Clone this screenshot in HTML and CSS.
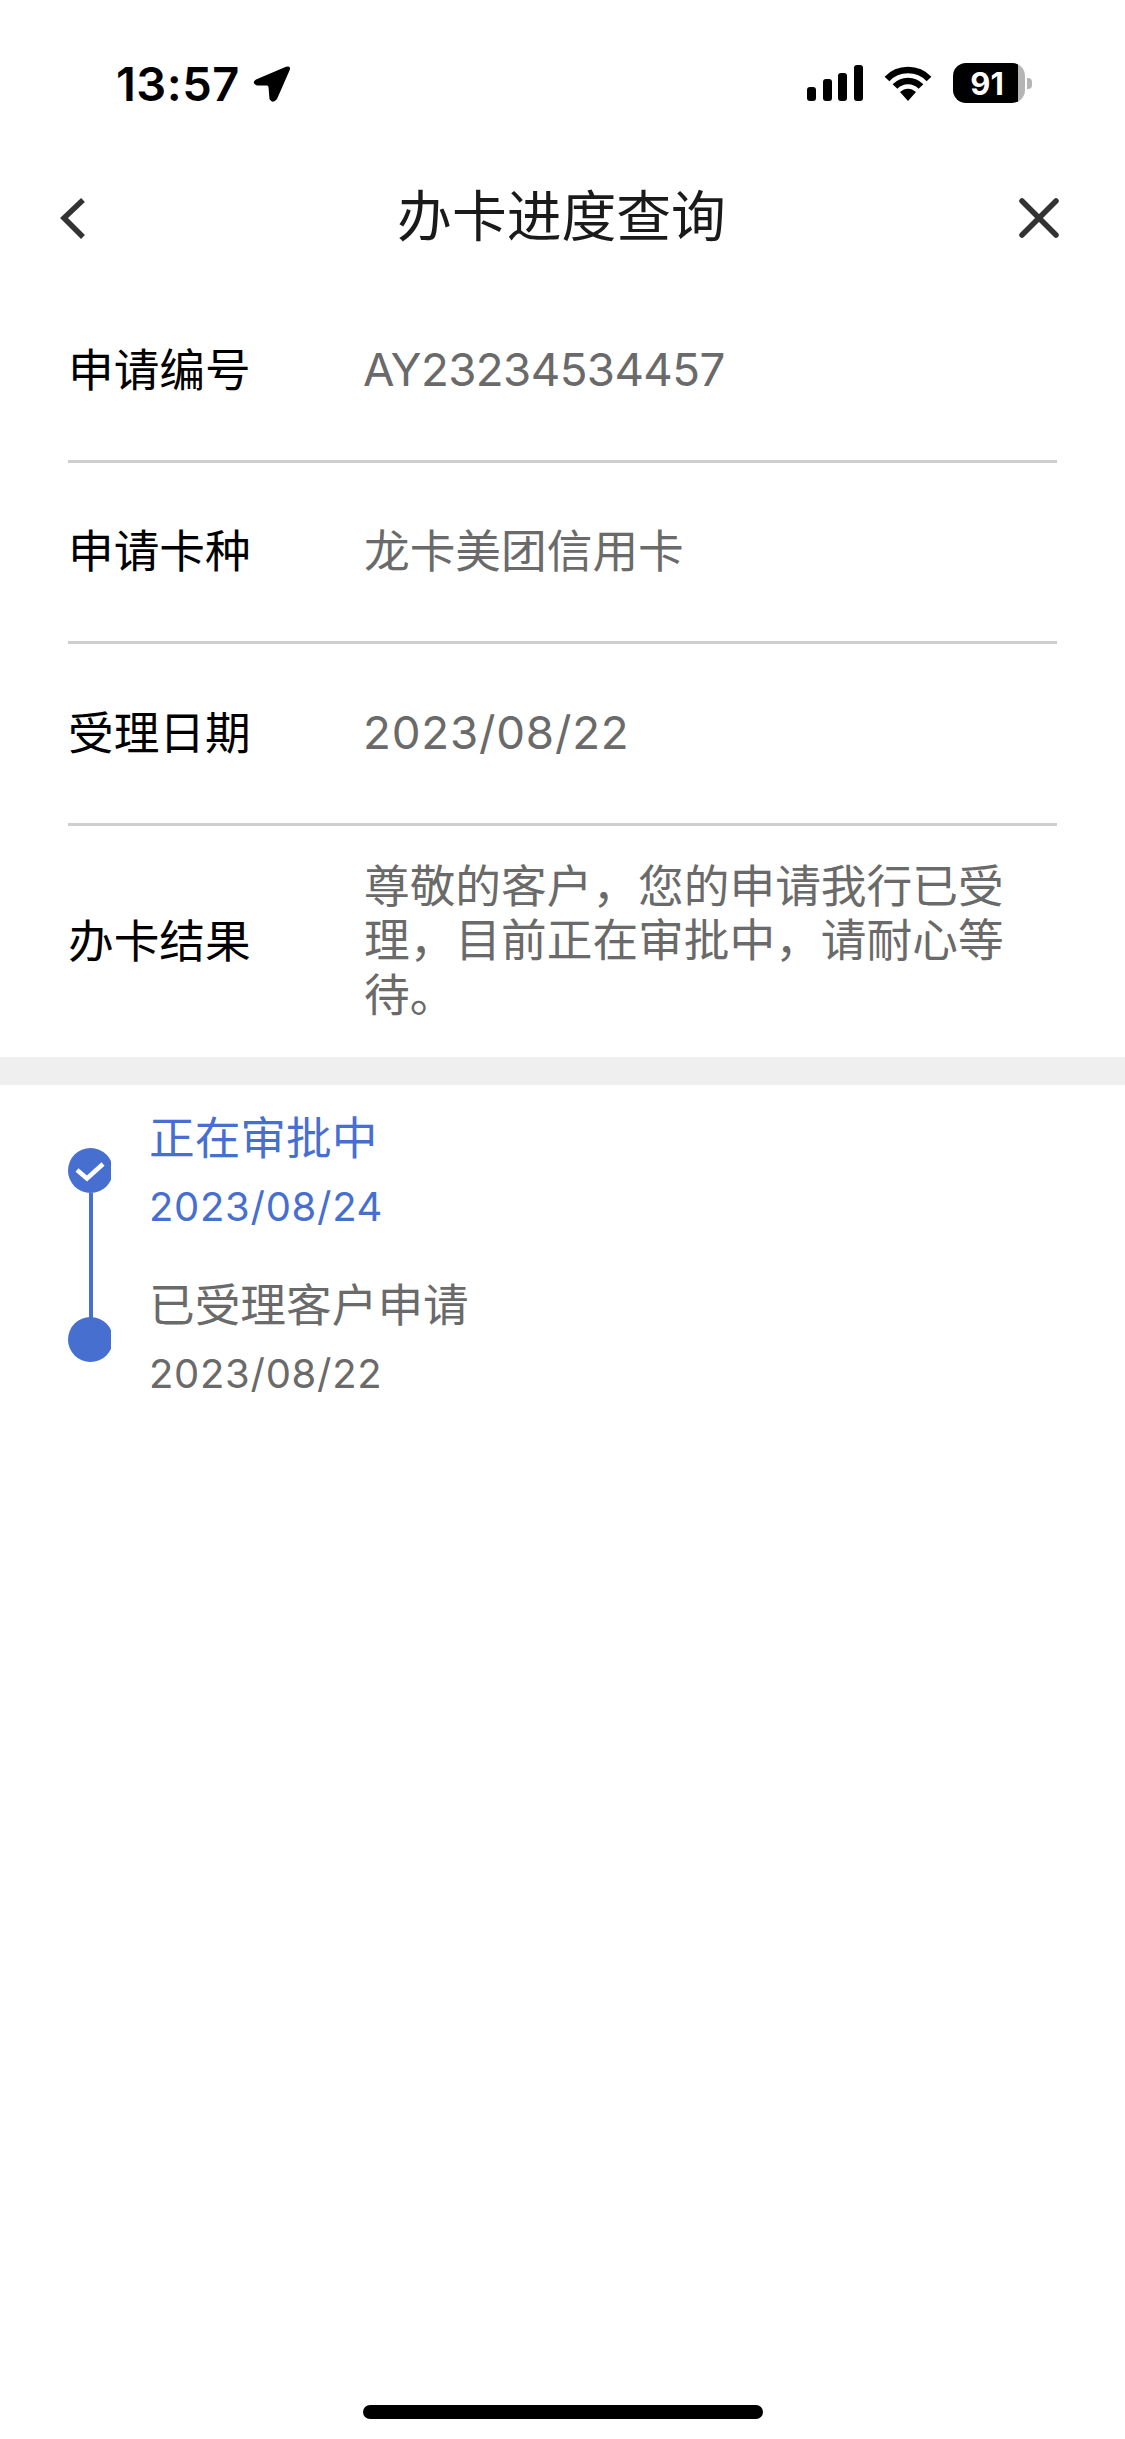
FILE: index.html
```html
<!DOCTYPE html>
<html lang="zh-CN">
<head>
    <meta charset="UTF-8">
    <meta name="viewport" content="width=device-width, initial-scale=1.0">
    <title>办卡进度查询</title>
    <link rel="stylesheet" href="styles.css">
</head>
<body>
    <div class="statusbar">
        <div class="status-left">
            <span class="time">13:57</span>
            <svg class="location" width="38" height="37" viewBox="0 0 38 37"><path d="M3 13.5 L33 0.8 Q38.5 -0.8 36.5 4.5 L24 33 Q19.5 38.5 16.5 33 L15.5 21 Q15.3 19.5 14 19.5 L4 19.5 Q-2 17 3 13.5 Z" fill="#000"/></svg>
        </div>
        <div class="status-right">
            <svg width="56" height="36" viewBox="0 0 56 36"><rect x="0" y="22" width="9" height="14" rx="3" fill="#000"/><rect x="16" y="14" width="9" height="22" rx="3" fill="#000"/><rect x="31" y="8" width="9" height="28" rx="3" fill="#000"/><rect x="47" y="0" width="9" height="36" rx="3" fill="#000"/></svg>
            <svg width="48" height="36" viewBox="0 0 48 36"><path d="M3 14 C14 2 34 2 45 14" fill="none" stroke="#000" stroke-width="6.5"/><path d="M11 21.5 C18 14 30 14 37 21.5" fill="none" stroke="#000" stroke-width="6.5"/><path d="M16 27 C21 22.5 27 22.5 32 27 L24 36 Z" fill="#000"/></svg>
            <div class="battery">
                <div class="battery-body"><span>91</span></div>
                <div class="battery-tip"></div>
            </div>
        </div>
    </div>

    <div class="navbar">
        <svg class="back" width="30" height="46" viewBox="0 0 30 46"><path d="M25 5 L6 23 L25 42" fill="none" stroke="#333" stroke-width="5.5"/></svg>
        <h1>办卡进度查询</h1>
        <svg class="close" width="46" height="46" viewBox="0 0 46 46"><path d="M6 6 L40 40 M40 6 L6 40" fill="none" stroke="#333" stroke-width="5.5" stroke-linecap="round"/></svg>
    </div>

    <div class="info">
        <div class="row">
            <div class="label">申请编号</div>
            <div class="value value-id">AY23234534457</div>
        </div>
        <div class="row">
            <div class="label">申请卡种</div>
            <div class="value">龙卡美团信用卡</div>
        </div>
        <div class="row">
            <div class="label">受理日期</div>
            <div class="value value-date">2023/08/22</div>
        </div>
        <div class="row row-last">
            <div class="label">办卡结果</div>
            <div class="value">尊敬的客户，您的申请我行已受理，目前正在审批中，请耐心等待。</div>
        </div>
    </div>

    <div class="divider"></div>

    <div class="timeline">
        <div class="step active">
            <div class="dot">
                <svg width="43" height="45" viewBox="0 0 43 45"><circle cx="22.5" cy="22.5" r="22.5" fill="#466fd0"/><path d="M9 22 L19 30.5 L35 16" fill="none" stroke="#fff" stroke-width="4.5"/></svg>
            </div>
            <div class="step-text">
                <div class="step-title">正在审批中</div>
                <div class="step-date">2023/08/24</div>
            </div>
        </div>
        <div class="step">
            <div class="dot">
                <svg width="43" height="45" viewBox="0 0 43 45"><circle cx="22.5" cy="22.5" r="22.5" fill="#466fd0"/></svg>
            </div>
            <div class="step-text">
                <div class="step-title">已受理客户申请</div>
                <div class="step-date">2023/08/22</div>
            </div>
        </div>
    </div>

    <div class="home-bar"></div>
</body>
</html>
```

FILE: styles.css
```css
html, body {
    margin: 0;
    padding: 0;
    height: 100%;
    background-color: #fff;
    font-family: Inter, "Noto Sans CJK SC", sans-serif;
}
body {
    width: 1125px;
    height: 2439px;
    display: flex;
    flex-direction: column;
    overflow: hidden;
}
.statusbar {
    height: 166px;
    padding: 60px 93px 0 116px;
    box-sizing: border-box;
    display: flex;
    justify-content: space-between;
    align-items: flex-start;
    flex-shrink: 0;
}
.status-left {
    display: flex;
    align-items: center;
    gap: 13px;
}
.time {
    font-size: 47px;
    font-weight: 600;
    line-height: 48px;
    letter-spacing: 0.5px;
    color: #000;
}
.status-right {
    display: flex;
    align-items: center;
    gap: 21px;
    padding-top: 3px;
}
.battery {
    display: flex;
    align-items: center;
    gap: 2px;
}
.battery-body {
    width: 72px;
    height: 40px;
    border-radius: 13px;
    background: linear-gradient(to right, #000 65px, #b5b5b5 65px);
    display: flex;
    align-items: center;
    justify-content: center;
    padding-right: 4px;
    box-sizing: border-box;
}
.battery-body span {
    font-size: 31px;
    font-weight: 700;
    color: #fff;
}
.battery-tip {
    width: 5px;
    height: 11px;
    background-color: #b5b5b5;
    border-radius: 0 4px 4px 0;
}
.navbar {
    height: 104px;
    padding: 0 63px 0 58px;
    display: grid;
    grid-template-columns: 1fr auto 1fr;
    align-items: center;
    flex-shrink: 0;
}
.navbar h1 {
    margin: 0;
    padding: 0 0 5px 3px;
    font-size: 54.8px;
    font-weight: 400;
    line-height: 60px;
    color: #1a1a1a;
}
.close {
    justify-self: end;
}
.info {
    padding: 0 68px;
    flex-shrink: 0;
}
.row {
    height: 182px;
    display: flex;
    align-items: center;
    border-bottom: 3px solid #cfcfcf;
    box-sizing: border-box;
}
.row:first-child {
    height: 193px;
    padding-top: 11px;
}
.row:nth-child(2) {
    height: 181px;
}
.row-last {
    height: 231px;
    border-bottom: none;
}
.label {
    width: 296px;
    flex-shrink: 0;
    font-size: 45.7px;
    line-height: 54px;
    color: #000;
}
.value {
    font-size: 45.7px;
    line-height: 54.5px;
    color: #6a6a6a;
}
.value-id {
    margin-left: -1px;
    letter-spacing: -0.6px;
}
.value-date {
    margin-left: -1px;
    letter-spacing: 0.8px;
}
.divider {
    height: 28px;
    background-color: #efefef;
    flex-shrink: 0;
}
.timeline {
    padding: 24px 68px 0;
}
.step {
    display: flex;
    gap: 38px;
    height: 167px;
}
.dot {
    width: 43px;
    height: 45px;
    margin-top: 39px;
    position: relative;
    flex-shrink: 0;
}
.step:last-child .dot {
    margin-top: 41px;
}
.dot svg {
    display: block;
}
.step.active .dot::after {
    content: "";
    position: absolute;
    left: 21px;
    top: 45px;
    width: 4px;
    height: 125px;
    background-color: #466fd0;
}
.step-title {
    font-size: 45.7px;
    line-height: 60px;
    color: #6a6a6a;
}
.step-date {
    font-size: 40px;
    line-height: 48px;
    letter-spacing: 0.7px;
    margin-top: 14px;
    color: #6a6a6a;
}
.active .step-title, .active .step-date {
    color: #466fd0;
}
.home-bar {
    width: 400px;
    height: 14px;
    border-radius: 7px;
    background-color: #000;
    margin: auto auto 20px;
    flex-shrink: 0;
}
```
